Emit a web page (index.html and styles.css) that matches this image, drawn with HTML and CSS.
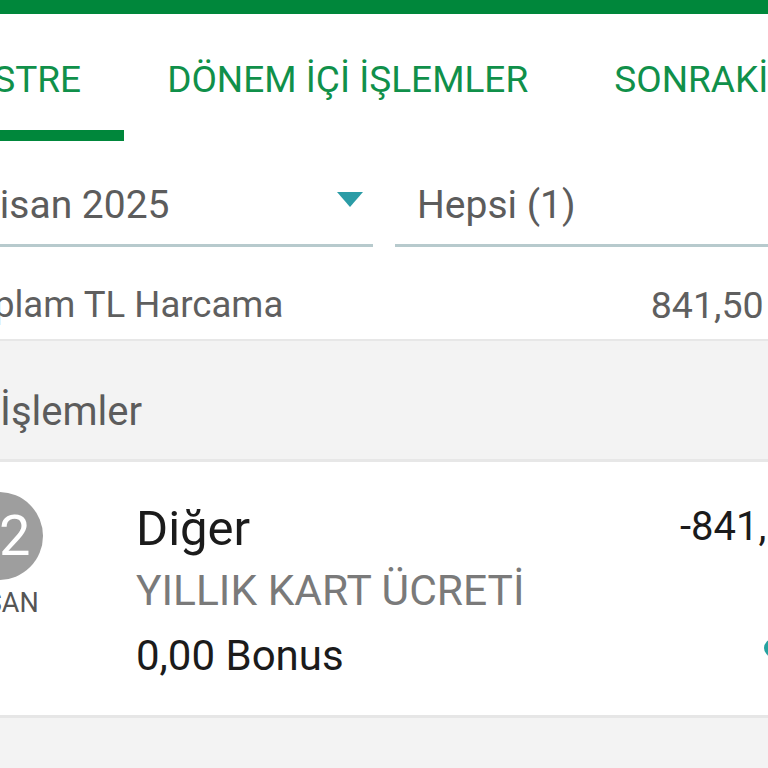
FILE: index.html
```html
<!DOCTYPE html>
<html lang="tr">
<head>
<meta charset="utf-8">
<link rel="stylesheet" href="styles.css">
</head>
<body>
<div class="topbar"></div>
<nav class="tabs">
  <div class="tab active">EKSTRE</div>
  <div class="tab">DÖNEM İÇİ İŞLEMLER</div>
  <div class="tab">SONRAKİ DÖNEM</div>
</nav>
<div class="filters">
  <div class="field">
    <span class="field-text">Nisan 2025</span>
    <svg class="caret" width="26" height="15" viewBox="0 0 26 15"><path d="M0 0H26L13 15Z" fill="#2b9ca6"/></svg>
  </div>
  <div class="field">
    <span class="field-text">Hepsi (1)</span>
  </div>
</div>
<div class="total">
  <span>Toplam TL Harcama</span>
  <span class="total-amount">841,50 TL</span>
</div>
<div class="section-head">İşlemler</div>
<div class="card">
  <div class="date">
    <div class="day">12</div>
    <div class="month">NİSAN</div>
  </div>
  <div class="details">
    <div class="title">Diğer</div>
    <div class="subtitle">YILLIK KART ÜCRETİ</div>
    <div class="bonus">0,00 Bonus</div>
  </div>
  <div class="amount-col">
    <div class="amount">-841,50 TL</div>
    <svg class="badge" width="22" height="22" viewBox="0 0 22 22"><circle cx="11" cy="11" r="9" fill="#26a2a0"/></svg>
  </div>
</div>
<div class="rest"></div>
</body>
</html>
```

FILE: styles.css
```css
html, body {
  margin: 0;
  padding: 0;
  background: #f3f3f3;
  overflow: hidden;
  width: 768px;
  height: 768px;
  font-family: Roboto, "Noto Sans", sans-serif;
}

.topbar {
  height: 14px;
  background: #00873b;
}

.tabs {
  display: flex;
  background: #fff;
  margin-left: -94px;
  white-space: nowrap;
}

.tab {
  flex: none;
  padding: 44px 43px 28px;
  font-size: 37px;
  line-height: 44px;
  font-weight: 400;
  color: #10904a;
  border-bottom: 11px solid transparent;
}

.tab.active {
  border-bottom-color: #00873b;
}

.filters {
  display: grid;
  grid-template-columns: 423px 423px;
  column-gap: 22px;
  margin-left: -50px;
  padding-top: 40px;
  background: #fff;
}

.field {
  display: flex;
  align-items: flex-start;
  justify-content: space-between;
  padding: 0 10px 15px 22px;
  border-bottom: 3px solid #b7cacd;
}

.field-text {
  font-size: 39px;
  line-height: 48px;
  color: #5c5c5c;
}

.caret {
  margin-top: 11px;
}

.total {
  display: flex;
  justify-content: space-between;
  width: 868px;
  box-sizing: border-box;
  margin-left: -50px;
  padding: 36px 3px 12px 3px;
  font-size: 36.6px;
  line-height: 44px;
  color: #5f5f5f;
  background: #fff;
  white-space: nowrap;
}

.total-amount {
  font-size: 37.6px;
}

.section-head {
  border-top: 2px solid #e7e7e7;
  border-bottom: 3px solid #e7e7e7;
  background: #f3f3f3;
  padding: 48px 0 24px;
  font-size: 40px;
  line-height: 46px;
  color: #5c5c5c;
}

.card {
  display: grid;
  grid-template-columns: 100px 457px auto;
  column-gap: 87px;
  margin-left: -51px;
  background: #fff;
  border-bottom: 3px solid #e6e6e6;
  height: 253px;
  white-space: nowrap;
}

.date {
  display: flex;
  flex-direction: column;
  align-items: center;
  padding-top: 30px;
}

.day {
  width: 88px;
  height: 88px;
  border-radius: 50%;
  background: #9e9e9e;
  color: #fff;
  font-size: 56px;
  line-height: 88px;
  text-align: center;
}

.month {
  margin-top: 8px;
  font-size: 27px;
  line-height: 30px;
  color: #555;
}

.details {
  padding-top: 36px;
}

.title {
  font-size: 49px;
  line-height: 62px;
  color: #1b1b1b;
}

.subtitle {
  font-size: 42.5px;
  line-height: 62px;
  color: #7a7a7a;
}

.bonus {
  margin-top: 2px;
  font-size: 42px;
  line-height: 64px;
  color: #1b1b1b;
}

.amount-col {
  display: flex;
  flex-direction: column;
  padding-top: 41px;
}

.amount {
  font-size: 40px;
  line-height: 48px;
  color: #1b1b1b;
}

.badge {
  margin: 86px 0 0 82px;
}

.rest {
  height: 60px;
  background: #f3f3f3;
}
```
